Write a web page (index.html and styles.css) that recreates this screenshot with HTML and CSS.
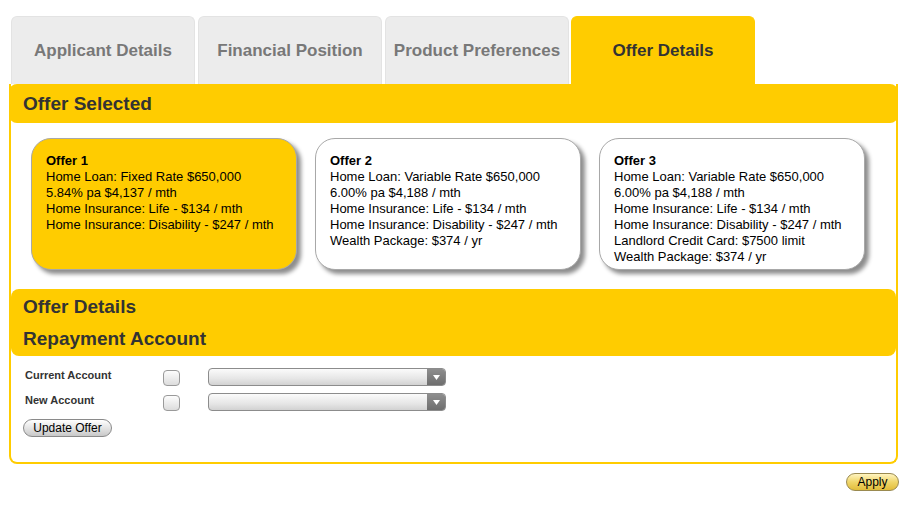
FILE: index.html
```html
<!DOCTYPE html>
<html lang="en">

<head>
    <meta charset="UTF-8" />
    <meta name="viewport" content="width=device-width, initial-scale=1.0" />
    <title>Offer Details</title>
    <link rel="stylesheet" href="styles.css">
</head>

<body>
    <div class="page">
        <!-- Wizard tabs -->
        <div class="tabs">
            <div class="tab">Applicant Details</div>
            <div class="tab">Financial Position</div>
            <div class="tab">Product Preferences</div>
            <div class="tab active">Offer Details</div>
        </div>

        <div class="panel">
            <div class="section-head first">
                <h2 class="section-title">Offer Selected</h2>
            </div>

            <div class="offers">
                <div class="offer selected">
                    <div class="offer-name">Offer 1</div>
                    <div>Home Loan: Fixed Rate $650,000</div>
                    <div>5.84% pa $4,137 / mth</div>
                    <div>Home Insurance: Life - $134 / mth</div>
                    <div>Home Insurance: Disability - $247 / mth</div>
                </div>
                <div class="offer">
                    <div class="offer-name">Offer 2</div>
                    <div>Home Loan: Variable Rate $650,000</div>
                    <div>6.00% pa $4,188 / mth</div>
                    <div>Home Insurance: Life - $134 / mth</div>
                    <div>Home Insurance: Disability - $247 / mth</div>
                    <div>Wealth Package: $374 / yr</div>
                </div>
                <div class="offer">
                    <div class="offer-name">Offer 3</div>
                    <div>Home Loan: Variable Rate $650,000</div>
                    <div>6.00% pa $4,188 / mth</div>
                    <div>Home Insurance: Life - $134 / mth</div>
                    <div>Home Insurance: Disability - $247 / mth</div>
                    <div>Landlord Credit Card: $7500 limit</div>
                    <div>Wealth Package: $374 / yr</div>
                </div>
            </div>

            <div class="section-head">
                <h2 class="section-title">Offer Details</h2>
                <h2 class="section-title">Repayment Account</h2>
            </div>

            <div class="repay-form">
                <div class="form-row">
                    <label class="form-label">Current Account</label>
                    <input type="checkbox" class="check">
                    <div class="select"><span class="select-arrow"><svg width="7" height="5" viewBox="0 0 7 5"><path d="M0 0H7L3.5 5Z" fill="#fff"/></svg></span></div>
                </div>
                <div class="form-row">
                    <label class="form-label">New Account</label>
                    <input type="checkbox" class="check">
                    <div class="select"><span class="select-arrow"><svg width="7" height="5" viewBox="0 0 7 5"><path d="M0 0H7L3.5 5Z" fill="#fff"/></svg></span></div>
                </div>
                <button class="btn">Update Offer</button>
            </div>
        </div>

        <div class="actions">
            <button class="btn btn-apply">Apply</button>
        </div>
    </div>
</body>

</html>
```

FILE: styles.css
```css
body {
    margin: 0;
    background: #fff;
    font-family: 'Liberation Sans', Arial, sans-serif;
    color: #000;
}

.page {
    width: 891px;
    padding: 16px 0 0 9px;
}

/* Tabs */
.tabs {
    display: flex;
    gap: 3px;
    margin-left: 2px;
}

.tab {
    width: 182px;
    height: 67px;
    display: flex;
    align-items: center;
    justify-content: center;
    background: #ececec;
    border: 1px solid #e3e3e3;
    border-bottom: none;
    border-radius: 6px 6px 0 0;
    color: #787878;
    font-size: 17px;
    font-weight: bold;
}

.tab.active {
    background: #ffcc00;
    border-color: #ffcc00;
    color: #333;
}

.tab:last-child {
    margin-left: -1px;
}

/* Main panel */
.panel {
    width: 885px;
    border: 2px solid #ffcc00;
    border-top: none;
    border-radius: 0 0 8px 8px;
}

.section-head {
    background: #ffcc00;
    border-radius: 8px;
    padding: 2px 12px 1px;
}

.section-head.first {
    margin: 0 -2px;
    padding: 0 14px;
    height: 39px;
    display: flex;
    align-items: center;
}

.section-title {
    margin: 0;
    font-size: 19px;
    line-height: 32px;
    color: #333;
}

/* Offer cards */
.offers {
    display: flex;
    gap: 18px;
    padding: 15px 0 19px 20px;
}

.offer {
    width: 250px;
    height: 116px;
    padding: 14px 0 0 14px;
    background: #fff;
    border: 1px solid #a8a8a8;
    border-radius: 20px;
    box-shadow: 4px 4px 4px rgba(0, 0, 0, 0.45);
    font-size: 13px;
    line-height: 16px;
}

.offer.selected {
    background: #ffcc00;
}

.offer-name {
    font-weight: bold;
}

/* Repayment form */
.repay-form {
    padding: 12px 14px 25px;
}

.form-row {
    display: flex;
    align-items: center;
    height: 18px;
    margin-bottom: 7px;
}

.form-label {
    width: 138px;
    font-size: 11px;
    font-weight: bold;
    color: #333;
    position: relative;
    top: -2px;
}

.check {
    appearance: none;
    width: 17px;
    height: 16px;
    margin: 2px 28px 0 0;
    border: 1px solid #9a9a9a;
    border-radius: 4px;
    background: linear-gradient(#fdfdfd, #dcdcdc);
}

.select {
    width: 236px;
    height: 16px;
    display: flex;
    justify-content: flex-end;
    border: 1px solid #8c8c8c;
    border-radius: 4px;
    background: linear-gradient(#fbfbfb, #e6e6e6 60%, #d2d2d2);
    overflow: hidden;
}

.select-arrow {
    width: 18px;
    display: flex;
    align-items: center;
    justify-content: center;
    background: linear-gradient(#8e8e8e, #6e6e6e);
}

.btn {
    font-family: 'Liberation Sans', Arial, sans-serif;
    font-size: 12px;
    height: 18px;
    width: 89px;
    padding: 0;
    margin: 1px 0 0 -2px;
    border: 1px solid #8a8a8a;
    border-radius: 9px;
    background: linear-gradient(#ffffff, #e4e4e4 50%, #c8c8c8);
    color: #000;
}

.actions {
    display: flex;
    justify-content: flex-end;
    width: 890px;
    padding-top: 9px;
}

.btn-apply {
    width: 53px;
    margin: 0;
    border-color: #9a8a50;
    background: linear-gradient(#fff4c0, #f0d66a 50%, #e2bd3a);
}
```
